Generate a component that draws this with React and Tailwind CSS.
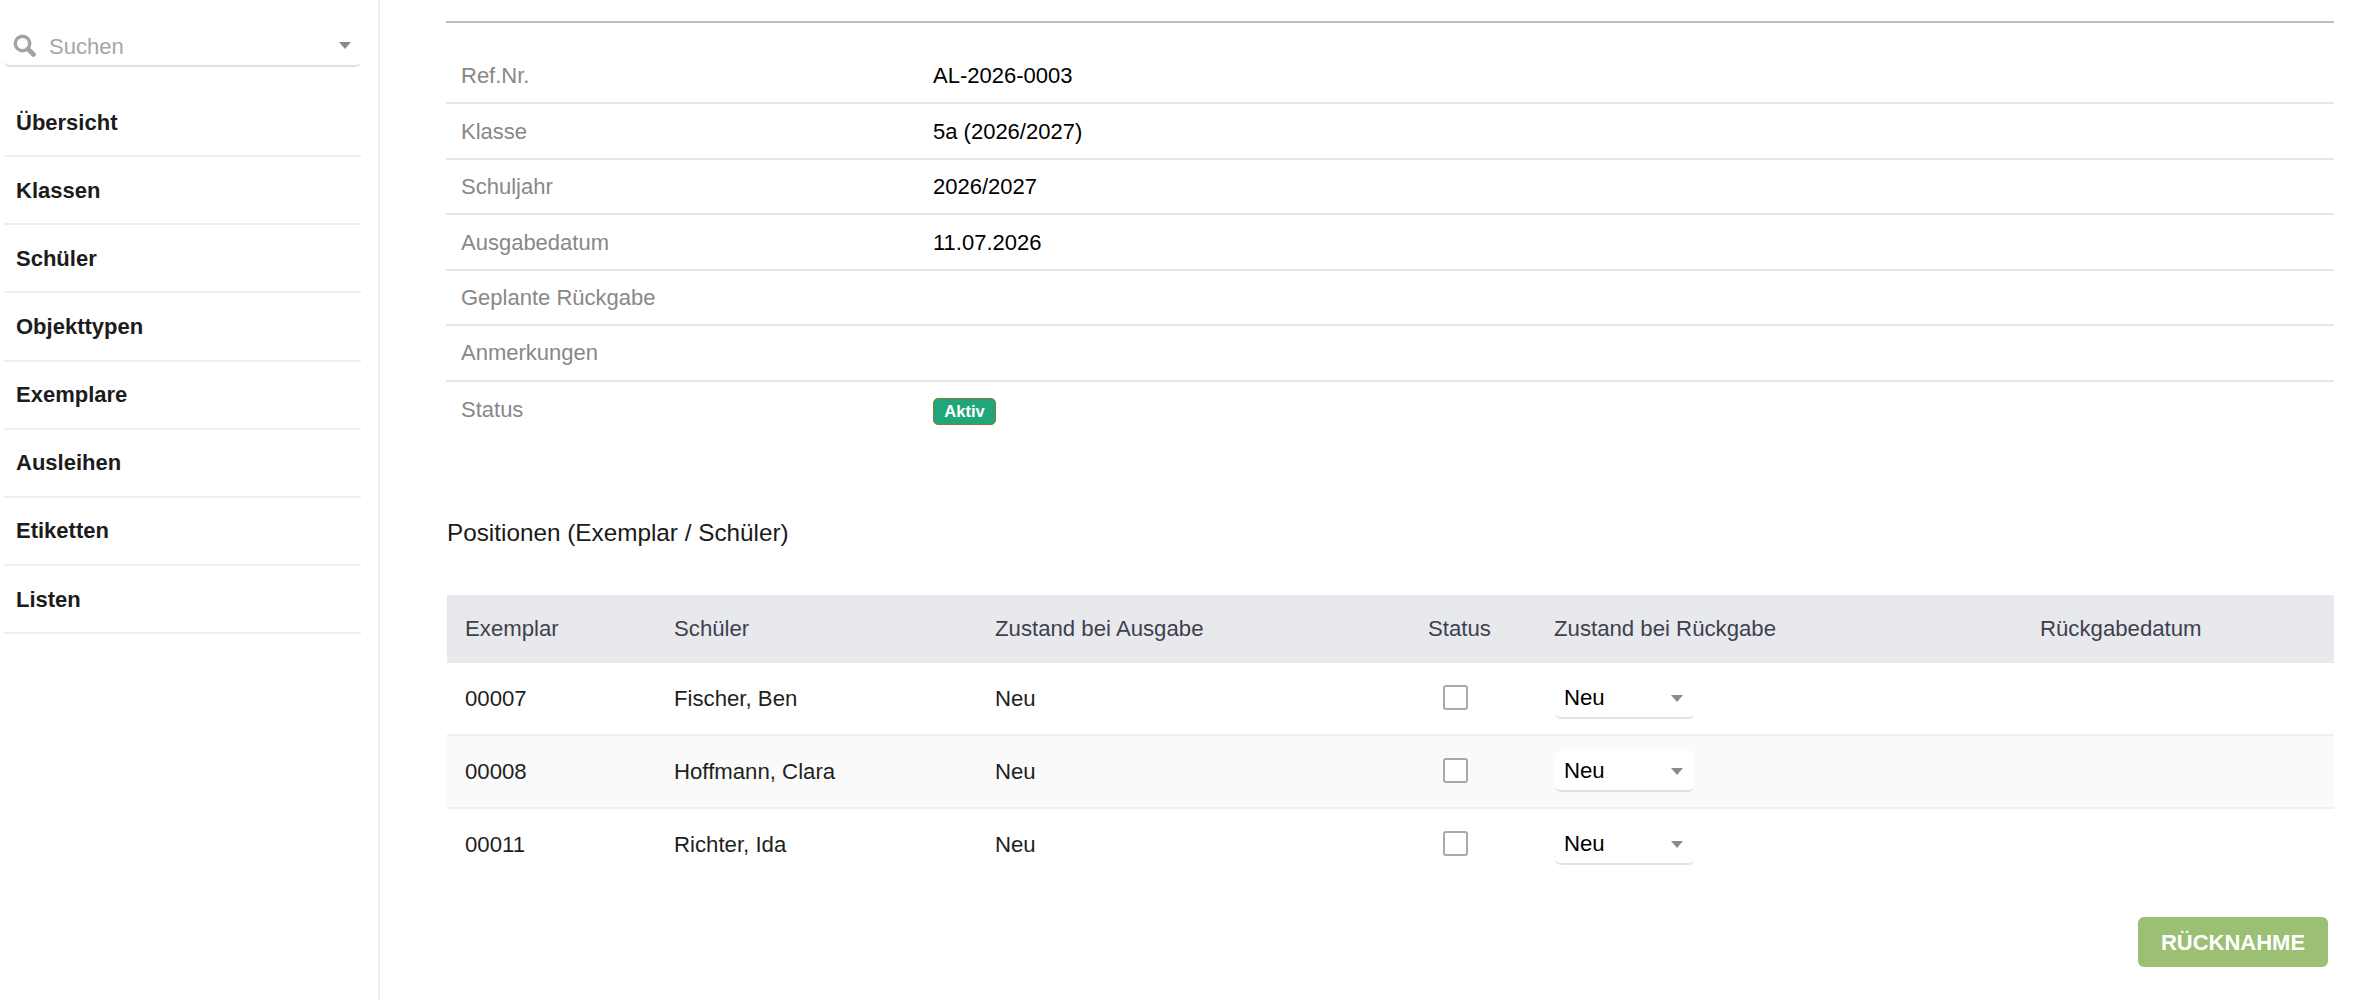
import React from "react";

const nav = ["Übersicht", "Klassen", "Schüler", "Objekttypen", "Exemplare", "Ausleihen", "Etiketten", "Listen"];
const details = [
  ["Ref.Nr.", "AL-2026-0003"],
  ["Klasse", "5a (2026/2027)"],
  ["Schuljahr", "2026/2027"],
  ["Ausgabedatum", "11.07.2026"],
  ["Geplante Rückgabe", ""],
  ["Anmerkungen", ""],
];
const rows = [
  ["00007", "Fischer, Ben"],
  ["00008", "Hoffmann, Clara"],
  ["00011", "Richter, Ida"],
];

function Caret({ className }) {
  return (
    <svg width="12" height="7" viewBox="0 0 12 7" className={className}>
      <path d="M0 0H12L6 7Z" fill="#8a8a8a" />
    </svg>
  );
}

function SearchIcon() {
  return (
    <svg width="23" height="23" viewBox="0 0 23 23" fill="none" stroke="#a3a3a3">
      <circle cx="9.5" cy="9.5" r="7.2" strokeWidth="3.4" />
      <path d="M15 15L20.5 20.5" strokeWidth="4.6" strokeLinecap="round" />
    </svg>
  );
}

export default function App() {
  return (
    <div className="flex h-[1000px] overflow-hidden bg-white font-['Liberation_Sans',Arial,sans-serif] text-[22px]">
      <aside className="w-[380px] shrink-0 border-r-2 border-[#f0f0f0] pl-1 pr-[17px] pt-[26px]">
        <div className="flex h-[41px] items-center rounded-md border-b-2 border-[#e0e0e0] pl-[9px] pr-[10px]">
          <SearchIcon />
          <span className="ml-[13px] pt-[1px] text-[#a6a6a6]">Suchen</span>
          <Caret className="ml-auto" />
        </div>
        <nav className="mt-[22px]">
          {nav.map((n) => (
            <div key={n} className="flex h-[68.15px] items-center border-b-2 border-[#eeeeee] pl-3 font-bold text-[#1c1c1c]">
              {n}
            </div>
          ))}
        </nav>
      </aside>
      <main className="min-w-0 flex-1 pl-[66px] pr-[28px] pt-[21px]">
        <div className="h-[2px] bg-[#bdbdbd]" />
        <div className="mt-[26px]">
          {details.map(([k, v]) => (
            <div key={k} className="flex h-[55.45px] items-center border-b-2 border-[#e6e6e6]">
              <span className="w-[487px] pl-[15px] text-[#888888]">{k}</span>
              <span className="text-black">{v}</span>
            </div>
          ))}
          <div className="flex h-[55.4px] items-center">
            <span className="w-[487px] pl-[15px] text-[#888888]">Status</span>
            <span className="mt-[5px] flex h-[27px] w-[63px] items-center justify-center rounded-[5px] border border-[#8a7a30] bg-[#21a67a] text-[16.5px] font-bold text-white">
              Aktiv
            </span>
          </div>
        </div>
        <h2 className="ml-[1px] mt-[80px] text-[24.3px] leading-[32px] font-normal text-[#1a1a1a]">Positionen (Exemplar / Schüler)</h2>
        <div className="ml-[1px] mt-[46px] text-[22.2px]">
          <div className="flex h-[68px] items-center bg-[#e8e9ed] text-[#3f3f4e]">
            <span className="w-[227px] pl-[18px]">Exemplar</span>
            <span className="w-[321px]">Schüler</span>
            <span className="w-[433px]">Zustand bei Ausgabe</span>
            <span className="w-[126px]">Status</span>
            <span className="w-[486px]">Zustand bei Rückgabe</span>
            <span>Rückgabedatum</span>
          </div>
          {rows.map(([id, name], i) => (
            <div key={id} className={`flex h-[73px] items-center border-b-2 text-[#1f1f1f] ${i === 1 ? "bg-[#fafafa]" : "bg-white"} ${i < 2 ? "border-[#f0f0f0]" : "border-transparent"}`}>
              <span className="w-[227px] pl-[18px]">{id}</span>
              <span className="w-[321px]">{name}</span>
              <span className="w-[448px]">Neu</span>
              <span className="w-[112px]">
                <span className="-mt-[2px] block h-[25px] w-[25px] rounded-[3px] border-2 border-[#a8a8b0] bg-white" />
              </span>
              <span className="flex h-[41px] w-[139px] items-center justify-between rounded-md border-b-2 border-[#e2e2e2] bg-white pl-[9px] pr-[11px] pt-[1px] text-black">
                Neu
                <Caret />
              </span>
            </div>
          ))}
        </div>
        <div className="mt-[35px] flex justify-end pr-[6px]">
          <button className="h-[50px] w-[190px] rounded-md bg-[#9bc074] text-[22px] font-bold text-white">RÜCKNAHME</button>
        </div>
      </main>
    </div>
  );
}
